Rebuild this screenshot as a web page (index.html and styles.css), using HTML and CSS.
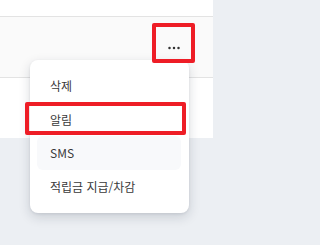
FILE: index.html
```html
<!DOCTYPE html>
<html lang="ko">
<head>
<meta charset="utf-8">
<link rel="stylesheet" href="styles.css">
</head>
<body>
<div class="panel">
  <div class="top"></div>
  <div class="row">
    <button class="more" type="button" aria-label="더보기">
      <svg width="12" height="4" viewBox="0 0 12 4"><circle cx="1.5" cy="2" r="1.25" fill="#333"/><circle cx="6" cy="2" r="1.25" fill="#333"/><circle cx="10.5" cy="2" r="1.25" fill="#333"/></svg>
    </button>
  </div>
  <div class="rest"></div>
</div>
<ul class="menu">
  <li class="item">삭제</li>
  <li class="item">알림</li>
  <li class="item hover">SMS</li>
  <li class="item">적립금 지급/차감</li>
</ul>
<div class="mark mark-more"></div>
<div class="mark mark-item"></div>
</body>
</html>
```
FILE: styles.css
```css
html, body {
  margin: 0;
  padding: 0;
}
body {
  background: #eceff3;
  font-family: "Noto Sans CJK KR", "Noto Sans", sans-serif;
  width: 222px;
  height: 245px;
  overflow: hidden;
  position: relative;
}
.panel {
  width: 213px;
  background: #ffffff;
}
.top {
  height: 16px;
  border-bottom: 1px solid #e3e3e3;
}
.row {
  height: 60px;
  background: #fafafa;
  border-bottom: 1px solid #e3e3e3;
  display: flex;
  align-items: center;
  justify-content: flex-end;
  padding-right: 23px;
}
.more {
  width: 32px;
  height: 32px;
  border: 0;
  background: transparent;
  padding: 0;
  display: flex;
  align-items: center;
  justify-content: center;
  margin-top: 2px;
}
.more svg {
  display: block;
}
.rest {
  height: 60px;
}
.menu {
  position: absolute;
  left: 30px;
  top: 60px;
  width: 159px;
  box-sizing: border-box;
  margin: 0;
  padding: 9px 8px 10px 7px;
  list-style: none;
  background: #ffffff;
  border-radius: 8px;
  box-shadow: 0 4px 12px rgba(20, 30, 50, 0.16), 0 1px 3px rgba(20, 30, 50, 0.08);
}
.item {
  height: 33.5px;
  display: flex;
  align-items: center;
  padding-left: 13px;
  font-size: 12px;
  color: #3a3a3a;
  border-radius: 6px;
  white-space: nowrap;
}
.item.hover {
  background: #f8f9fb;
}
.mark {
  position: absolute;
  border: 4px solid #ee1d26;
  border-radius: 2px;
  box-sizing: border-box;
}
.mark-more {
  left: 152px;
  top: 23px;
  width: 43px;
  height: 40px;
}
.mark-item {
  left: 25px;
  top: 102px;
  width: 161px;
  height: 33px;
}
```
